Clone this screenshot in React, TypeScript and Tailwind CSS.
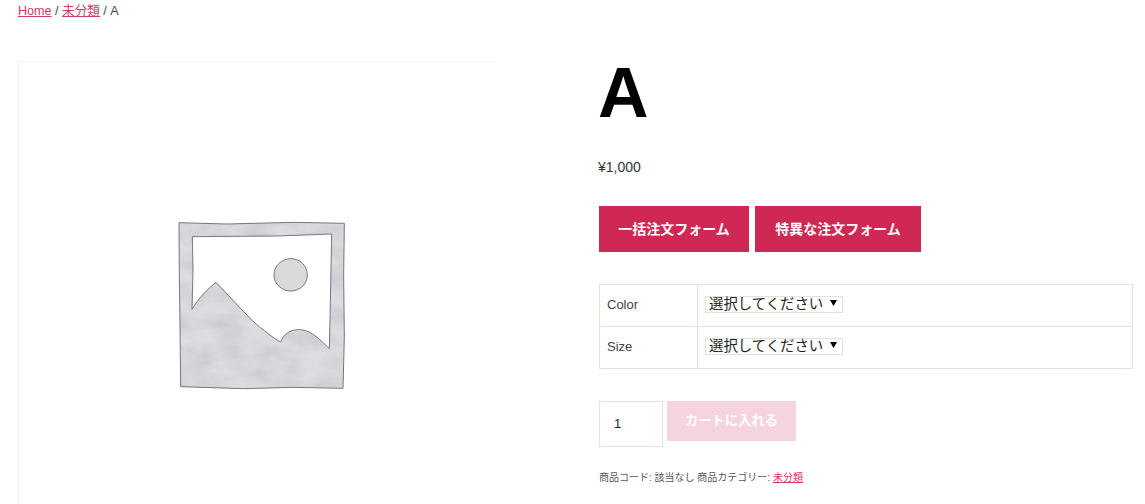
const jp = "font-['Liberation_Sans','Noto_Sans_CJK_JP',sans-serif]";

const frame =
  'M57 38 L200 42 L400 37 L553 40 L551 200 L553 380 L549 535 L400 532 L250 536 L62 530 L60 350 L58 200 Z M97 80 L99 180 L96 298 C115 265 140 240 168 217 C205 255 240 295 280 335 C310 360 340 385 362 396 C370 375 385 362 410 359 C435 357 455 368 475 385 C490 398 500 408 508 416 L511 280 L515 72 L350 78 Z';

function Placeholder() {
  // coordinates follow a 3x crop of the picture
  return (
    <svg viewBox="0 0 600 570" className="w-[200px] h-[190px]" fill="none">
      <defs>
        <filter id="blot" x="0" y="0" width="100%" height="100%" colorInterpolationFilters="sRGB">
          <feTurbulence type="fractalNoise" baseFrequency="0.012 0.022" numOctaves="3" seed="4" />
          <feColorMatrix values="0 0 0 0 0.76  0 0 0 0 0.77  0 0 0 0 0.79  1.2 0 0 0 -0.36" />
          <feComposite in2="SourceAlpha" operator="in" />
          <feMerge>
            <feMergeNode in="SourceGraphic" />
            <feMergeNode />
          </feMerge>
        </filter>
      </defs>
      <path fillRule="evenodd" fill="#dcdde0" filter="url(#blot)" d={frame} />
      <path fillRule="evenodd" stroke="#77777c" strokeWidth="3" strokeLinejoin="round" d={frame} />
      <path
        fill="#d8d9db"
        stroke="#77777c"
        strokeWidth="3"
        d="M392 146 C420 145 442 168 442 195 C442 222 420 243 392 243 C365 243 342 222 342 195 C342 168 365 146 392 146 Z"
      />
    </svg>
  );
}

function VariationRow({ label, last }: { label: string; last?: boolean }) {
  return (
    <div className={`flex ${last ? 'h-[41px]' : 'h-[42px] border-b border-[#e4e1d6]'}`}>
      <div className="w-[98px] flex items-center pl-[7px] pb-[2px] text-[13px] text-[#43454b] border-r border-[#e4e1d6]">{label}</div>
      <div className="flex-1 flex items-center pl-[7px] pb-[2px]">
        <div className="w-[138px] h-[17px] border border-[#e4e1d6] flex items-center pl-[3px] text-[14.4px] leading-none text-[#222]">
          選択してください
          <svg viewBox="0 0 7 6" className="w-[7px] h-[6px] ml-[7px] mb-[3px]">
            <path d="M0 0H7L3.5 6Z" fill="#000" />
          </svg>
        </div>
      </div>
    </div>
  );
}

export default function App() {
  return (
    <div className={`w-[1145px] h-[504px] overflow-hidden bg-white pl-[18px] ${jp}`}>
      <div className="h-[61px] pt-[2px] text-[12.6px] leading-[18px] text-[#43454b]">
        <a className="text-[#d13a66] underline">Home</a> / <a className="text-[#d13a66] underline">未分類</a> / A
      </div>
      <div className="flex items-start">
        <div className="w-[479px] h-[479px] shrink-0 border-l border-t border-[#f3f3f3] pl-[141px] pt-[148px]">
          <Placeholder />
        </div>
        <div className="ml-[101px] w-[535px]">
          <h1 className="-mt-[6px] h-[76px] text-[70px] leading-[76px] font-bold text-black">A</h1>
          <p className="mt-[26px] text-[14px] leading-[20px] text-[#33353a]">¥1,000</p>
          <div className="mt-[29px] ml-[1px] flex gap-[6px]">
            <button className="w-[150px] h-[46px] bg-[#cf2854] text-white text-[14px] font-bold">一括注文フォーム</button>
            <button className="w-[166px] h-[46px] bg-[#cf2854] text-white text-[14px] font-bold">特異な注文フォーム</button>
          </div>
          <div className="mt-[32px] ml-[1px] border border-[#e4e1d6]">
            <VariationRow label="Color" />
            <VariationRow label="Size" last />
          </div>
          <div className="mt-[32px] ml-[1px] flex items-start gap-[4px]">
            <div className="w-[64px] h-[46px] border border-[#e4e1d6] flex items-center pl-[14px] text-[13px] text-[#222]">1</div>
            <button className="w-[129px] h-[40px] bg-[#f5d4de] text-white text-[13.3px] font-bold">カートに入れる</button>
          </div>
          <p className="mt-[24px] ml-[1px] text-[10px] leading-[14px] text-[#55575c]">
            商品コード: 該当なし 商品カテゴリー: <a className="text-[#d13a66] underline">未分類</a>
          </p>
        </div>
      </div>
    </div>
  );
}
